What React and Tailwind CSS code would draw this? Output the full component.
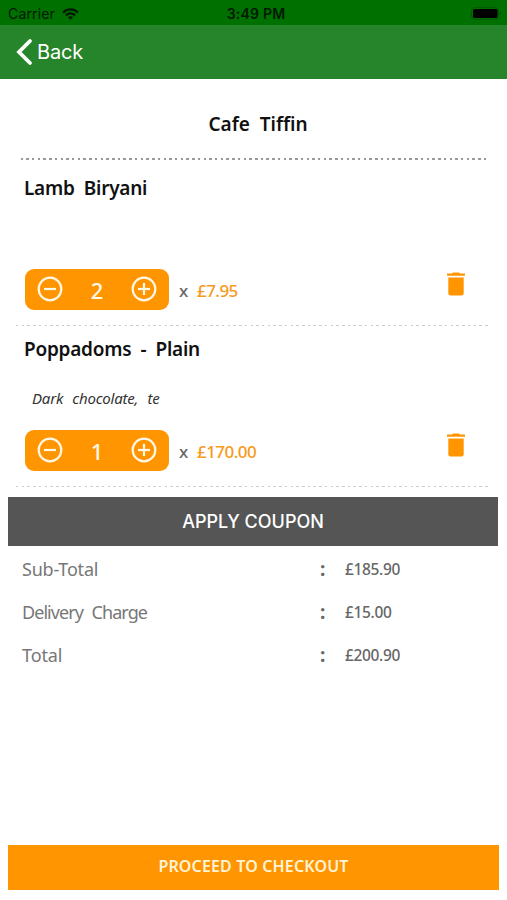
import { useState } from "react";

const initialItems = [
  { id: 1, name: "Lamb Biryani", note: "", qty: 2, price: "£7.95" },
  { id: 2, name: "Poppadoms - Plain", note: "Dark chocolate, te", qty: 1, price: "£170.00" },
];

const totals = [
  { label: "Sub-Total", value: "£185.90", tracking: "tracking-[-0.2px]" },
  { label: "Delivery Charge", value: "£15.00", tracking: "tracking-[-0.95px]" },
  { label: "Total", value: "£200.90", tracking: "tracking-[-0.1px]" },
];

function WifiIcon() {
  return (
    <svg width="17" height="12" viewBox="0 0 17 12" fill="none" stroke="#001a00" strokeWidth="2.3">
      <path d="M1 4.6C5.2 0.4 11.8 0.4 16 4.6" />
      <path d="M3.9 7.4C6.5 4.8 10.5 4.8 13.1 7.4" />
      <path d="M8.5 11.8L6 9.3C7.4 8 9.6 8 11 9.3Z" fill="#001a00" stroke="none" />
    </svg>
  );
}

function BatteryIcon() {
  return (
    <svg width="31" height="14" viewBox="0 0 31 14">
      <rect x="0.5" y="0.5" width="27" height="12" rx="3.5" fill="none" stroke="#005a00" />
      <rect x="2" y="2" width="24.5" height="9" rx="1.5" fill="#000" />
      <path d="M29 4.5C30.6 5 30.6 8 29 8.5Z" fill="#005200" />
    </svg>
  );
}

function CircleIcon({ plus }) {
  return (
    <svg width="26" height="26" viewBox="0 0 26 26" fill="none" stroke="#fff8e6" strokeWidth="2.2">
      <circle cx="13" cy="13" r="11.3" />
      <path d="M7 13H19" />
      {plus && <path d="M13 7V19" />}
    </svg>
  );
}

function TrashIcon() {
  return (
    <svg width="20" height="24" viewBox="0 0 20 24" fill="#ff9500">
      <path d="M1 1.4H6L7 0.4H13L14 1.4H19V3.8H1Z" />
      <path d="M2.3 5.4H17.7V21.2Q17.7 23.4 15.5 23.4H4.5Q2.3 23.4 2.3 21.2Z" />
    </svg>
  );
}

function CartItem({ item, onChange }) {
  return (
    <div className="flex h-40 flex-col">
      <h3 className="mt-[9px] h-7 pl-6 text-[19px] leading-7 font-semibold tracking-[-0.25px] [word-spacing:4.5px] text-[#111]">
        {item.name}
      </h3>
      <p className="mt-[23px] h-6 pl-8 text-[15px] leading-6 italic tracking-[-0.2px] [word-spacing:5.5px] text-[#333]">
        {item.note}
      </p>
      <div className="mt-5 flex h-[41px] items-center pl-[25px] pr-[41px]">
        <div className="flex h-[41px] w-[144px] items-center justify-between rounded-[9px] bg-[#ff9500] px-3 pb-0.5">
          <button onClick={() => onChange(-1)}>
            <CircleIcon />
          </button>
          <span className="pt-[3px] text-[22px] leading-none font-medium text-[#fff8e6]">{item.qty}</span>
          <button onClick={() => onChange(1)}>
            <CircleIcon plus />
          </button>
        </div>
        <span className="ml-[10px] w-[18px] pt-0.5 text-[17px] font-medium text-[#666]">x</span>
        <span className="pt-[3px] text-[17px] font-medium tracking-[-0.55px] text-[#f79a1b]">{item.price}</span>
        <button className="ml-auto pb-3">
          <TrashIcon />
        </button>
      </div>
    </div>
  );
}

function App() {
  const [items, setItems] = useState(initialItems);

  function changeQty(id, step) {
    setItems(items.map((i) => (i.id === id ? { ...i, qty: Math.max(1, i.qty + step) } : i)));
  }

  return (
    <div className="flex h-[900px] w-[507px] flex-col bg-white font-['Noto_Sans',sans-serif]">
      <div className="grid h-[25px] grid-cols-3 items-center bg-[#007000] pl-2 pr-[5px] pt-[2px] font-['Inter',sans-serif] text-[14px] text-[#001a00]">
        <div className="flex items-center gap-[7px]">
          <span className="tracking-[0.15px]">Carrier</span>
          <WifiIcon />
        </div>
        <span className="pl-0.5 text-center font-semibold tracking-[0.2px]">3:49 PM</span>
        <div className="flex justify-end">
          <BatteryIcon />
        </div>
      </div>
      <header className="flex h-[54px] items-center bg-[#26852a] pl-4 font-['Inter',sans-serif] text-white">
        <svg width="17" height="28" viewBox="0 0 17 28" fill="none" stroke="#fff" strokeWidth="3.8" strokeLinecap="round">
          <path d="M14 3L3 14L14 25" />
        </svg>
        <span className="ml-1 text-[20px] tracking-[-0.2px]">Back</span>
      </header>

      <h2 className="mt-[31px] h-[29px] pl-[9px] text-center text-[19px] leading-[29px] font-semibold [word-spacing:5px] text-[#111]">
        Cafe Tiffin
      </h2>
      <div className="mx-[19px] mt-[19px] h-[1.5px] bg-[repeating-linear-gradient(90deg,transparent_0_1.5px,#999_1.5px_4px,transparent_4px_5.72px)]" />

      <div className="mt-[5.5px]">
        {items.map((item) => (
          <div key={item.id}>
            <CartItem item={item} onChange={(step) => changeQty(item.id, step)} />
            <div className="ml-4 mr-4 h-px bg-[repeating-linear-gradient(90deg,#ccc_0_2.5px,transparent_2.5px_5.72px)]" />
          </div>
        ))}
      </div>

      <button className="ml-2 mr-[9px] mt-[10px] h-[49px] shrink-0 bg-[#555] font-['Inter',sans-serif] text-[18px] font-medium text-white">
        APPLY COUPON
      </button>
      <div className="mt-[2px]">
        {totals.map((row) => (
          <div key={row.label} className="flex h-[43px] items-center pl-[22px] text-[#777]">
            <span className={`w-[298px] text-[18px] [word-spacing:5px] ${row.tracking}`}>{row.label}</span>
            <span className="w-[25px] text-[19px] font-bold text-[#666]">:</span>
            <span className="text-[15.5px] font-medium tracking-[-0.35px] text-[#666]">{row.value}</span>
          </div>
        ))}
      </div>

      <button className="mb-[10px] ml-2 mr-2 mt-auto h-[45px] shrink-0 bg-[#ff9500] pb-[3px] text-[16px] font-semibold tracking-[0.15px] text-[#fff3d6]">
        PROCEED TO CHECKOUT
      </button>
    </div>
  );
}

export default App;
